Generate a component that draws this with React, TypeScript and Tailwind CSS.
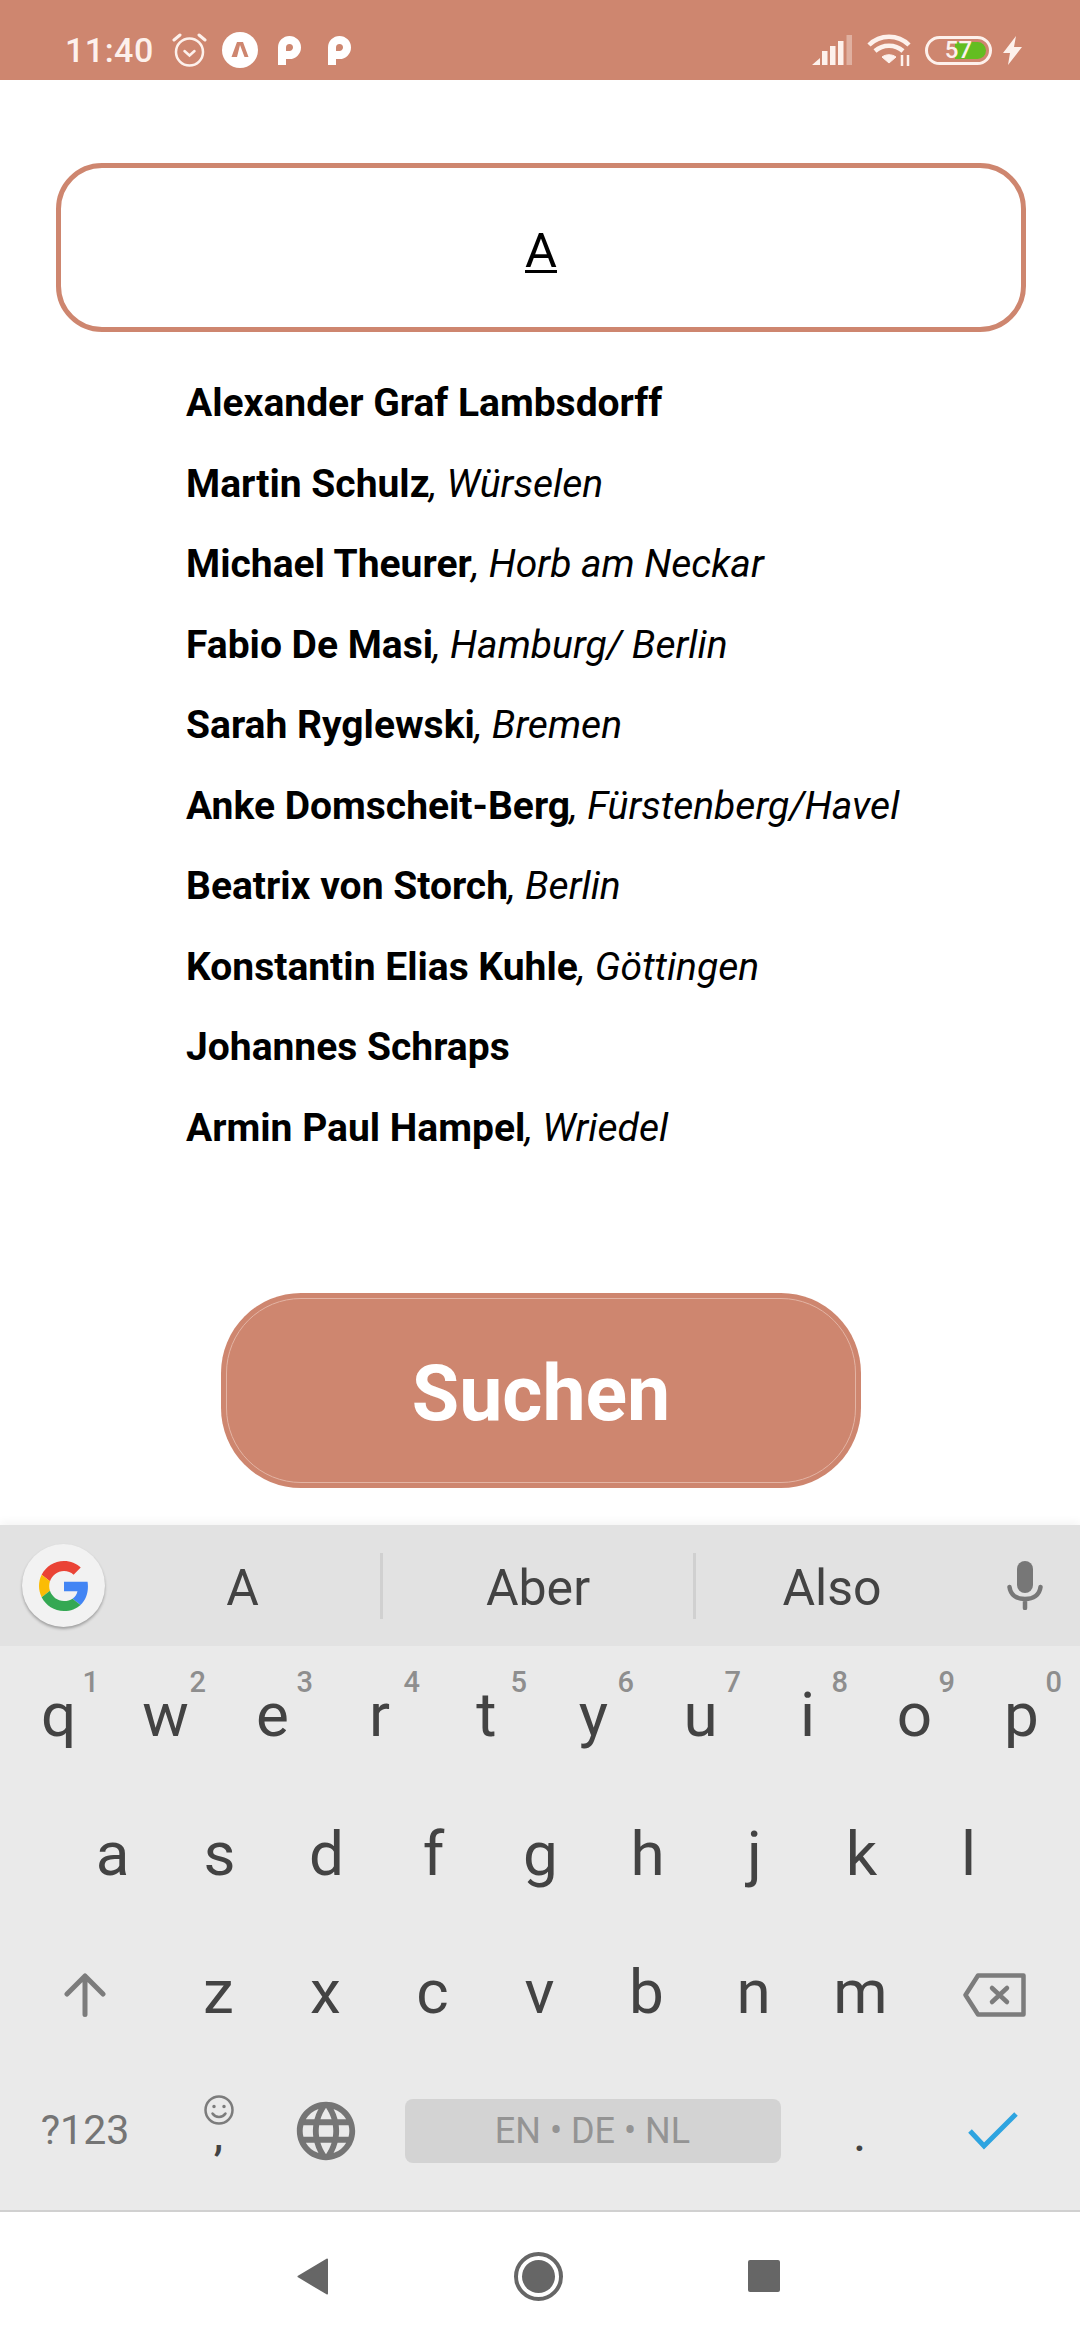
import React from 'react';
import { MdLanguage } from 'react-icons/md';

const people: [string, string?][] = [
  ['Alexander Graf Lambsdorff'],
  ['Martin Schulz', 'Würselen'],
  ['Michael Theurer', 'Horb am Neckar'],
  ['Fabio De Masi', 'Hamburg/ Berlin'],
  ['Sarah Ryglewski', 'Bremen'],
  ['Anke Domscheit-Berg', 'Fürstenberg/Havel'],
  ['Beatrix von Storch', 'Berlin'],
  ['Konstantin Elias Kuhle', 'Göttingen'],
  ['Johannes Schraps'],
  ['Armin Paul Hampel', 'Wriedel'],
];

const topRow = [
  ['q', '1'], ['w', '2'], ['e', '3'], ['r', '4'], ['t', '5'],
  ['y', '6'], ['u', '7'], ['i', '8'], ['o', '9'], ['p', '0'],
];

const Key = ({ label, hint }: { label: string; hint?: string }) => (
  <div className="relative flex h-[138.5px] w-[107px] items-center justify-center text-[62px] leading-none text-[#434343]">
    {label}
    {hint && (
      <span className="absolute right-[13px] top-[22px] text-[29px] font-medium leading-none text-[#8e8e8e]">{hint}</span>
    )}
  </div>
);

const PIcon = () => (
  <svg width="23" height="29" viewBox="0 0 23 29" fill="none">
    <path d="M4 29V11.500a7.500 7.500 0 1 1 7.500 7.500H6" stroke="#fff" strokeWidth="8" />
  </svg>
);

const StatusBar = () => (
  <div className="flex h-[80px] items-center justify-between bg-[#ce866f] pl-[65px] pr-[58px] pt-[20px] text-[#fdf1ec]">
    <div className="flex items-center">
      <span className="text-[34px] font-medium leading-none tracking-[0.5px]">11:40</span>
      <svg className="ml-[18px]" width="35" height="34" viewBox="0 0 35 34" fill="none" stroke="#fdf1ec" strokeLinecap="round">
        <circle cx="17.500" cy="19" r="13.500" strokeWidth="2.500" />
        <path d="M12.500 18l5 4.500 5-4.500" strokeWidth="2.500" />
        <path d="M2 7l6-5M33 7l-6-5" strokeWidth="3" />
      </svg>
      <svg className="ml-[15px]" width="36" height="36" viewBox="0 0 36 36">
        <circle cx="18" cy="18" r="18" fill="#fff" />
        <path d="M9.500 25l5.500-15h6l5.500 15h-4l-4.500-12-3 12z" fill="#ce866f" />
      </svg>
      <div className="ml-[20px]"><PIcon /></div>
      <div className="ml-[27px]"><PIcon /></div>
    </div>
    <div className="flex items-center">
      <svg width="40" height="30" viewBox="0 0 40 30" fill="#fdf1ec">
        <path d="M0 30l8-7v7zM10 16h5.500v14H10zM18 11h5.500v19H18zM26 6h5.500v24H26z" />
        <path d="M34.500 0H40v30h-5.500z" opacity="0.4" />
      </svg>
      <svg className="ml-[15px]" width="44" height="32" viewBox="0 0 44 32" fill="none" stroke="#fdf1ec">
        <path d="M2 11c11-11 29-11 40 0M8 17c8-7 20-7 28 0" strokeWidth="4.500" />
        <path d="M15 23c4-3 10-3 14 0l-7 6z" fill="#fdf1ec" strokeWidth="1" />
        <path d="M35 21v11M41 21v11" strokeWidth="2.500" />
      </svg>
      <div className="relative ml-[14px] h-[29px] w-[67px] rounded-full border-[3px] border-[#fdf1ec] p-[3px]">
        <div className="ml-auto h-full w-[31px] rounded-r-full bg-[#63bd21]" />
        <span className="absolute inset-0 flex items-center justify-center text-[24px] font-medium leading-none">57</span>
      </div>
      <svg className="ml-[11px]" width="19" height="29" viewBox="0 0 19 29" fill="#fdf1ec">
        <path d="M13 0L0 17h7l-2 12 14-18h-8z" />
      </svg>
    </div>
  </div>
);

const SearchForm = () => (
  <div className="flex flex-1 flex-col bg-white pt-[83px]">
    <div className="ml-[56px] flex h-[169px] w-[970px] items-center justify-center rounded-[46px] border-[5px] border-[#ce866f] pt-[5px]">
      <span className="text-[49px] leading-none text-black underline decoration-[3px] underline-offset-[3px]">A</span>
    </div>
    <ul className="mt-[31px] pl-[186px] text-[39px] text-black">
      {people.map(([name, place]) => (
        <li key={name} className="flex h-[80.5px] items-center whitespace-pre">
          <span className="font-bold">{name}</span>
          {place && <span className="italic">, {place}</span>}
        </li>
      ))}
    </ul>
    <button className="ml-[221px] mt-[125px] h-[195px] w-[640px] rounded-[80px] bg-[#ce866f] p-[5px]">
      <div className="flex h-full items-center justify-center rounded-[75px] border border-[#e3b4a4] pt-[8px] text-[77px] font-bold leading-none text-white">
        Suchen
      </div>
    </button>
  </div>
);

const GoogleG = () => (
  <svg width="50" height="50" viewBox="0 0 48 48">
    <path fill="#EA4335" d="M24 9.500c3.540 0 6.710 1.220 9.210 3.600l6.850-6.850C35.900 2.380 30.470 0 24 0 14.620 0 6.510 5.380 2.560 13.220l7.980 6.190C12.430 13.720 17.740 9.500 24 9.500z" />
    <path fill="#4285F4" d="M46.980 24.550c0-1.570-.15-3.090-.38-4.550H24v9.020h12.940c-.58 2.960-2.260 5.480-4.780 7.180l7.730 6c4.510-4.180 7.090-10.360 7.090-17.650z" />
    <path fill="#FBBC05" d="M10.530 28.590c-.48-1.450-.76-2.990-.76-4.590s.27-3.140.76-4.590l-7.980-6.190C.92 16.460 0 20.120 0 24c0 3.880.92 7.540 2.560 10.780l7.970-6.190z" />
    <path fill="#34A853" d="M24 48c6.480 0 11.930-2.130 15.890-5.810l-7.730-6c-2.150 1.450-4.920 2.300-8.160 2.300-6.260 0-11.570-4.220-13.470-9.910l-7.980 6.190C6.510 42.620 14.620 48 24 48z" />
  </svg>
);

const Keyboard = () => (
  <div className="bg-[#eaeaea] pb-[10px] shadow-[0_-4px_8px_rgba(0,0,0,0.04)]">
    <div className="flex h-[121px] items-center bg-[#e2e2e2] text-[50px] leading-none text-[#434343]">
      <div className="ml-[22px] flex h-[83px] w-[83px] shrink-0 items-center justify-center rounded-full bg-[#f2f2f2] shadow-[0_2px_3px_rgba(0,0,0,0.3)]">
        <GoogleG />
      </div>
      <div className="flex w-[275px] justify-center pt-[4px]">A</div>
      <div className="h-[66px] w-[3px] bg-[#d0d0d0]" />
      <div className="flex w-[310px] justify-center pt-[4px]">Aber</div>
      <div className="h-[66px] w-[3px] bg-[#d0d0d0]" />
      <div className="flex w-[272px] justify-center pt-[4px]">Also</div>
      <svg className="ml-[39px]" width="36" height="49" viewBox="0 0 36 49" fill="none">
        <rect x="10" y="0" width="16" height="32" rx="8" fill="#777" />
        <path d="M2.500 26c1 8 7 12 15.500 12s14.500-4 15.500-12M18 38v9" stroke="#777" strokeWidth="4.500" strokeLinecap="round" />
      </svg>
    </div>
    <div className="flex flex-col px-[5px]">
      <div className="flex">
        {topRow.map(([label, hint]) => <Key key={label} label={label} hint={hint} />)}
      </div>
      <div className="flex pl-[54px]">
        {'asdfghjkl'.split('').map((c) => <Key key={c} label={c} />)}
      </div>
      <div className="flex">
        <div className="flex h-[138.5px] w-[160px] items-center justify-center pt-[5px]">
          <svg width="42" height="44" viewBox="0 0 42 44" fill="none" stroke="#7c7c7c" strokeWidth="5" strokeLinecap="round" strokeLinejoin="round">
            <path d="M21 41.500V3M3 21L21 3l18 18" />
          </svg>
        </div>
        {'zxcvbnm'.split('').map((c) => <Key key={c} label={c} />)}
        <div className="flex h-[138.5px] w-[160px] items-center justify-center pt-[5px]">
          <svg width="63" height="44" viewBox="0 0 63 44" fill="none" stroke="#7c7c7c" strokeWidth="4.500" strokeLinejoin="round" strokeLinecap="round">
            <path d="M15 2.500h45.500v39H15L2.500 22z" />
            <path d="M29 15l15 14M44 15L29 29" />
          </svg>
        </div>
      </div>
      <div className="flex h-[138.5px] items-center">
        <div className="w-[160px] text-center text-[41px] leading-none text-[#757575]">?123</div>
        <div className="flex w-[107px] flex-col items-center">
          <svg width="30" height="30" viewBox="0 0 30 30" fill="none" stroke="#7c7c7c" strokeWidth="2.500" strokeLinecap="round">
            <circle cx="15" cy="15" r="13.500" />
            <circle cx="10" cy="11.500" r="1" fill="#7c7c7c" strokeWidth="1.500" />
            <circle cx="20" cy="11.500" r="1" fill="#7c7c7c" strokeWidth="1.500" />
            <path d="M8.500 18.500c3 4.500 10 4.500 13 0" />
          </svg>
          <span className="mt-[-10px] h-[52px] text-[42px] font-medium leading-none text-[#434343]">,</span>
        </div>
        <div className="flex w-[107px] justify-center">
          <MdLanguage size={70} color="#757575" />
        </div>
        <div className="flex w-[427px] justify-center">
          <div className="flex h-[64px] w-[376px] items-center justify-center rounded-[8px] bg-[#d3d3d3] text-[36px] leading-none text-[#949494]">EN • DE • NL</div>
        </div>
        <div className="flex w-[107px] justify-center pt-[12px] text-[42px] font-medium leading-none text-[#434343]">.</div>
        <div className="flex w-[160px] justify-center">
          <svg width="50" height="38" viewBox="0 0 50 38" fill="none" stroke="#2ea4e0" strokeWidth="5">
            <path d="M2 19l14 15L48 2" />
          </svg>
        </div>
      </div>
    </div>
  </div>
);

const NavBar = () => (
  <div className="flex h-[130px] items-center border-t-2 border-[#d0d0d0] bg-white pl-[297px]">
    <svg width="31" height="37" viewBox="0 0 31 37" fill="#666">
      <path d="M30 1.500L1.500 18.500 30 35.500z" stroke="#666" strokeWidth="2" strokeLinejoin="round" />
    </svg>
    <div className="ml-[186px] flex h-[49px] w-[49px] items-center justify-center rounded-full border-4 border-[#666]">
      <div className="h-[33px] w-[33px] shrink-0 rounded-full bg-[#666]" />
    </div>
    <div className="ml-[185px] h-[32px] w-[32px] rounded-[2px] bg-[#666]" />
  </div>
);

const App = () => (
  <div className="flex h-[2340px] w-[1080px] flex-col overflow-hidden bg-white font-['Roboto',sans-serif]">
    <StatusBar />
    <SearchForm />
    <Keyboard />
    <NavBar />
  </div>
);

export default App;
